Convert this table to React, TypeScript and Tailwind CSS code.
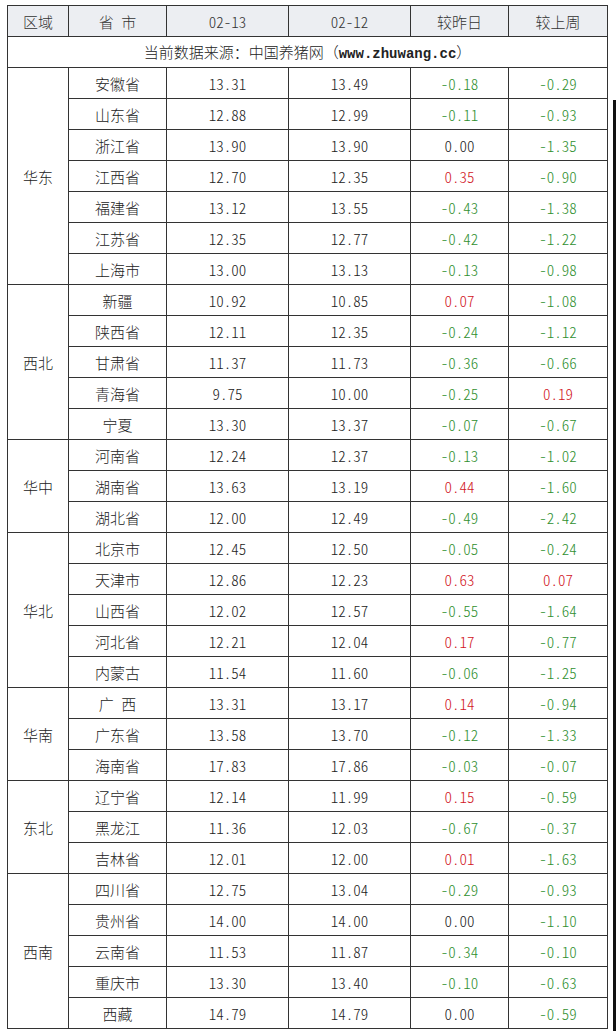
import React from "react";

type Row = [string, string, string, string, string];
const groups: { region: string; rows: Row[] }[] = [
  {
    region: "华东",
    rows: [
      ["安徽省", "13.31", "13.49", "-0.18", "-0.29"],
      ["山东省", "12.88", "12.99", "-0.11", "-0.93"],
      ["浙江省", "13.90", "13.90", "0.00", "-1.35"],
      ["江西省", "12.70", "12.35", "0.35", "-0.90"],
      ["福建省", "13.12", "13.55", "-0.43", "-1.38"],
      ["江苏省", "12.35", "12.77", "-0.42", "-1.22"],
      ["上海市", "13.00", "13.13", "-0.13", "-0.98"],
    ],
  },
  {
    region: "西北",
    rows: [
      ["新疆", "10.92", "10.85", "0.07", "-1.08"],
      ["陕西省", "12.11", "12.35", "-0.24", "-1.12"],
      ["甘肃省", "11.37", "11.73", "-0.36", "-0.66"],
      ["青海省", "9.75", "10.00", "-0.25", "0.19"],
      ["宁夏", "13.30", "13.37", "-0.07", "-0.67"],
    ],
  },
  {
    region: "华中",
    rows: [
      ["河南省", "12.24", "12.37", "-0.13", "-1.02"],
      ["湖南省", "13.63", "13.19", "0.44", "-1.60"],
      ["湖北省", "12.00", "12.49", "-0.49", "-2.42"],
    ],
  },
  {
    region: "华北",
    rows: [
      ["北京市", "12.45", "12.50", "-0.05", "-0.24"],
      ["天津市", "12.86", "12.23", "0.63", "0.07"],
      ["山西省", "12.02", "12.57", "-0.55", "-1.64"],
      ["河北省", "12.21", "12.04", "0.17", "-0.77"],
      ["内蒙古", "11.54", "11.60", "-0.06", "-1.25"],
    ],
  },
  {
    region: "华南",
    rows: [
      ["广 西", "13.31", "13.17", "0.14", "-0.94"],
      ["广东省", "13.58", "13.70", "-0.12", "-1.33"],
      ["海南省", "17.83", "17.86", "-0.03", "-0.07"],
    ],
  },
  {
    region: "东北",
    rows: [
      ["辽宁省", "12.14", "11.99", "0.15", "-0.59"],
      ["黑龙江", "11.36", "12.03", "-0.67", "-0.37"],
      ["吉林省", "12.01", "12.00", "0.01", "-1.63"],
    ],
  },
  {
    region: "西南",
    rows: [
      ["四川省", "12.75", "13.04", "-0.29", "-0.93"],
      ["贵州省", "14.00", "14.00", "0.00", "-1.10"],
      ["云南省", "11.53", "11.87", "-0.34", "-0.10"],
      ["重庆市", "13.30", "13.40", "-0.10", "-0.63"],
      ["西藏", "14.79", "14.79", "0.00", "-0.59"],
    ],
  },
];

function Change({ v }: { v: string }) {
  const n = parseFloat(v);
  const cls = n < 0 ? "text-[#2f8f2f]" : n > 0 ? "text-[#d1141e]" : "text-[#222]";
  return <span className={cls}>{v}</span>;
}

const cell = "border border-[#333] text-center align-middle p-0";

export default function App() {
  return (
    <div className="relative w-[616px] h-[1031px] bg-white overflow-hidden">
      <div className="pl-[7px] pt-[5px]">
        <table className="table-fixed border-collapse w-[600px] text-[15px] leading-none font-light text-[#222] [font-feature-settings:'hwid'] font-['Noto_Sans_CJK_SC','Noto_Sans_CJK_JP',sans-serif]">
          <colgroup>
            <col className="w-[61px]" />
            <col className="w-[98px]" />
            <col className="w-[122px]" />
            <col className="w-[122px]" />
            <col className="w-[98px]" />
            <col className="w-[99px]" />
          </colgroup>
          <thead>
            <tr className="h-[31px] bg-[#eceef2] text-[#333]">
              <td className={cell}>区域</td>
              <td className={cell}>省 市</td>
              <td className={cell}>02-13</td>
              <td className={cell}>02-12</td>
              <td className={cell}>较昨日</td>
              <td className={cell}>较上周</td>
            </tr>
          </thead>
          <tbody>
            <tr className="h-[31px]">
              <td className={cell + " [font-feature-settings:normal]"} colSpan={6}>
                当前数据来源：中国养猪网（
                <span className="font-['Liberation_Mono',monospace] font-bold text-[14px]">
                  www.zhuwang.cc
                </span>
                ）
              </td>
            </tr>
            {groups.map((g) =>
              g.rows.map((r, i) => (
                <tr key={g.region + r[0]} className="h-[31px]">
                  {i === 0 && (
                    <td className={cell} rowSpan={g.rows.length}>
                      {g.region}
                    </td>
                  )}
                  <td className={cell}>{r[0]}</td>
                  <td className={cell}>{r[1]}</td>
                  <td className={cell}>{r[2]}</td>
                  <td className={cell}>
                    <Change v={r[3]} />
                  </td>
                  <td className={cell}>
                    <Change v={r[4]} />
                  </td>
                </tr>
              ))
            )}
          </tbody>
        </table>
      </div>
      <div className="absolute right-0 top-[100px] bottom-0 w-[3px] bg-[#111]" />
    </div>
  );
}
